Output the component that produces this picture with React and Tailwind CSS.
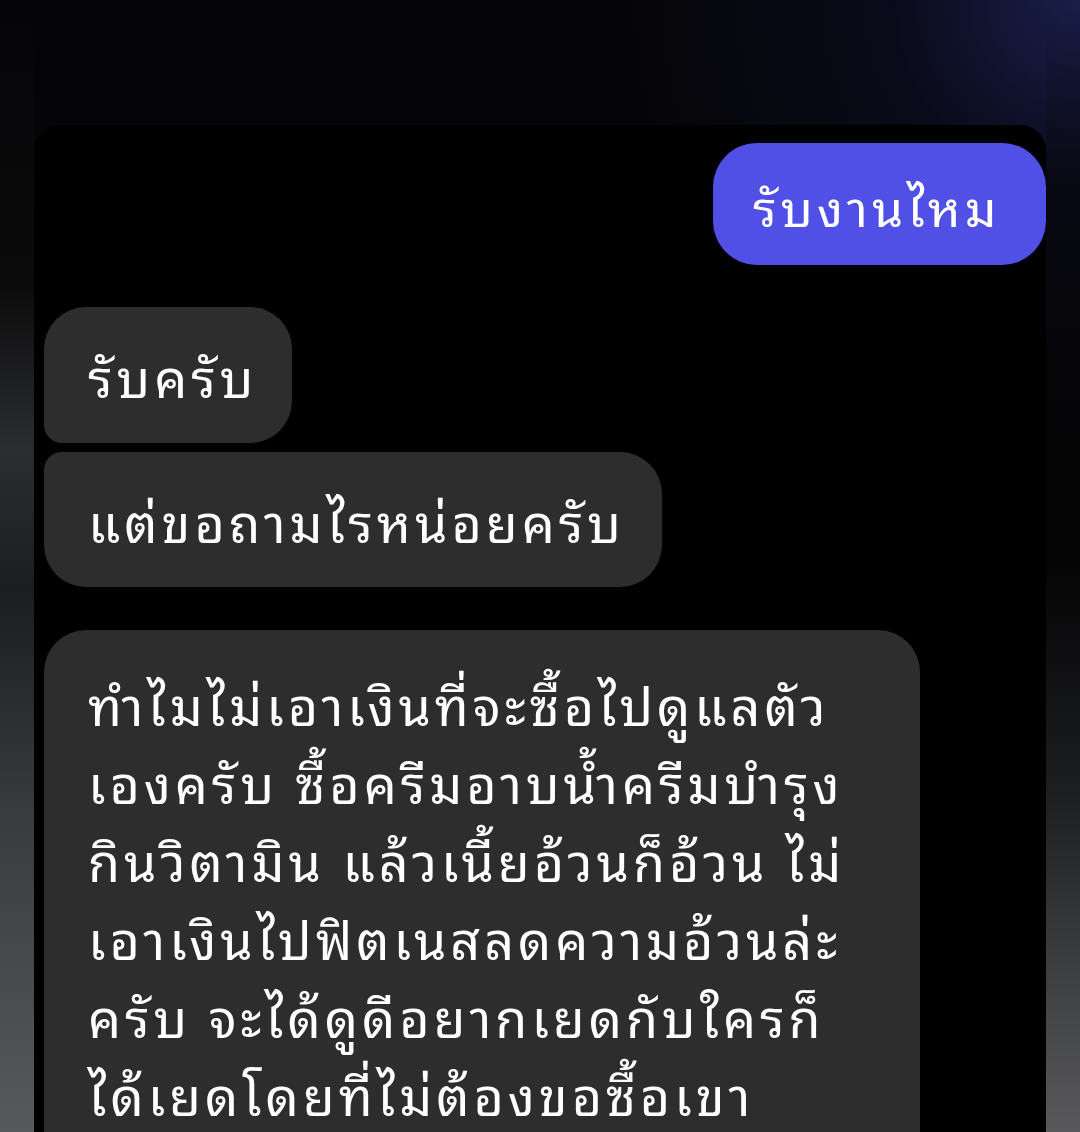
const lines = [
  "ทำไมไม่เอาเงินที่จะซื้อไปดูแลตัว",
  "เองครับ ซื้อครีมอาบน้ำครีมบำรุง",
  "กินวิตามิน แล้วเนี้ยอ้วนก็อ้วน ไม่",
  "เอาเงินไปฟิตเนสลดความอ้วนล่ะ",
  "ครับ จะได้ดูดีอยากเยดกับใครก็",
  "ได้เยดโดยที่ไม่ต้องขอซื้อเขา",
];

const App = () => {
  return (
    <div className="w-[1080px] h-[1132px] overflow-hidden flex font-['Noto_Sans_Thai_Looped','Noto_Sans',sans-serif] bg-[radial-gradient(circle_at_100%_0%,#1a1e4a_0%,#0a0b1a_12%,#050507_30%)]">
      {/* left blurred edge */}
      <div className="w-[34px] shrink-0 bg-[linear-gradient(to_bottom,transparent_0%,#0b0b0c_25%,#2c2d2f_40%,#1c1d1f_52%,#3a3b3d_72%,#58595b_100%)]" />

      {/* chat panel */}
      <div className="flex-1 pt-[125px]">
        <div className="h-full bg-black rounded-t-[26px] pt-[18px] pl-[10px] flex flex-col text-white tracking-[4px]">
          <div className="self-end w-[333px] h-[122px] rounded-[44px] bg-[#5050e6] flex items-center pl-[40px] text-[50px]">
            รับงานไหม
          </div>

          <div className="mt-[42px] self-start w-[248px] h-[136px] rounded-[42px] rounded-bl-[18px] bg-[#2d2d2d] flex items-center pl-[44px] text-[52px]">
            รับครับ
          </div>

          <div className="mt-[9px] self-start w-[618px] h-[135px] rounded-[42px] rounded-tl-[18px] bg-[#2d2d2d] flex items-center pl-[44px] text-[52px]">
            แต่ขอถามไรหน่อยครับ
          </div>

          <div className="mt-[43px] self-start w-[876px] flex-1 rounded-t-[42px] bg-[#2d2d2d] pl-[44px] pt-[34px] text-[52px] leading-[78px]">
            {lines.map((l) => (
              <div key={l} className="whitespace-nowrap">
                {l}
              </div>
            ))}
          </div>
        </div>
      </div>

      {/* right blurred edge */}
      <div className="w-[34px] shrink-0 bg-[linear-gradient(to_bottom,transparent_0%,#050506_50%,#1d1e20_70%,#3c3d3f_85%,#59595b_100%)]" />
    </div>
  );
};

export default App;
